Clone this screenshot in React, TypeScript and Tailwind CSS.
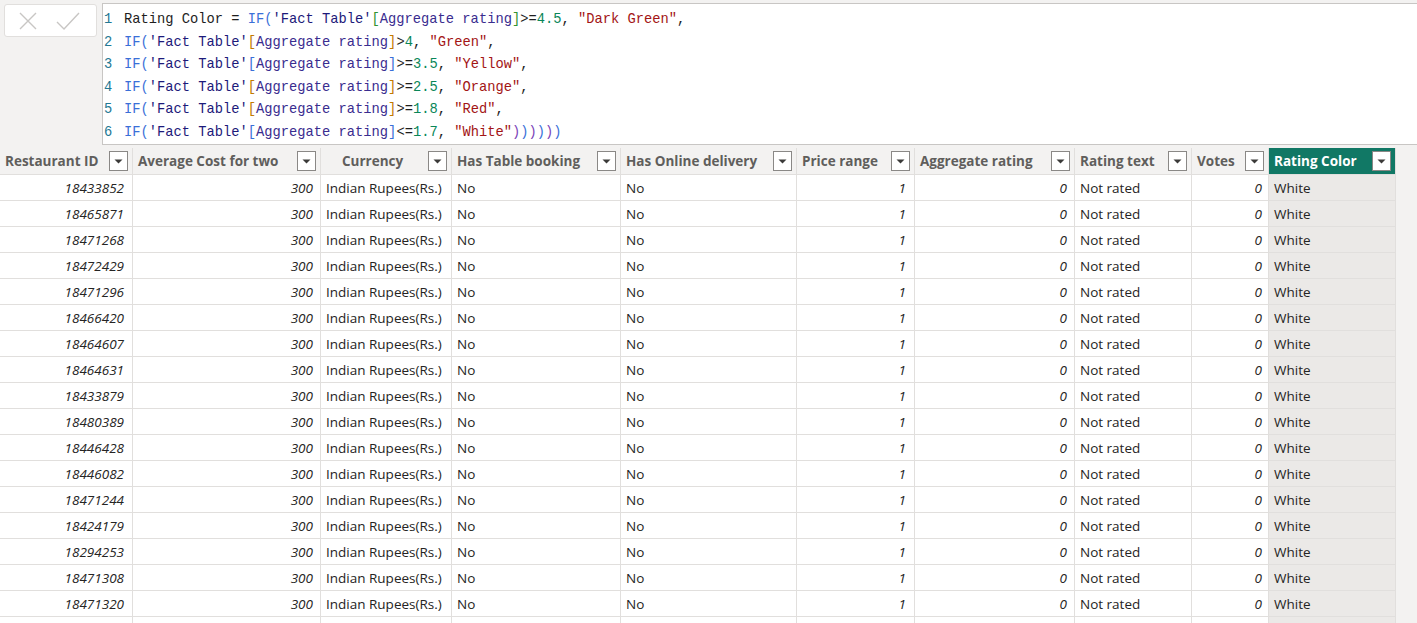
import React from "react";

type Tok = [string, string];

const C = {
  txt: "text-[#1e1e1e]",
  fn: "text-[#3a6fd8]",
  tbl: "text-[#1d1a7a]",
  col: "text-[#3a2d8f]",
  num: "text-[#098658]",
  str: "text-[#a31515]",
  b1: "text-[#319331]",
  b2: "text-[#c27a00]",
  b3: "text-[#3a6fd8]",
  b4: "text-[#7b3fb8]",
};

const bracket = [C.b2, C.b3, C.b2, C.b2, C.b3];

const formula: Tok[][] = [
  [
    ["Rating Color = ", C.txt],
    ["IF", C.fn],
    ["(", C.fn],
    ["'Fact Table'", C.tbl],
    ["[", C.b1],
    ["Aggregate rating", C.col],
    ["]", C.b1],
    [">=", C.txt],
    ["4.5", C.num],
    [", ", C.txt],
    ['"Dark Green"', C.str],
    [",", C.txt],
  ],
  ...[
    [">", "4", '"Green"', ","],
    [">=", "3.5", '"Yellow"', ","],
    [">=", "2.5", '"Orange"', ","],
    [">=", "1.8", '"Red"', ","],
    ["<=", "1.7", '"White"', ""],
  ].map(([op, n, s, end], i): Tok[] => [
    ["IF", C.fn],
    ["(", C.fn],
    ["'Fact Table'", C.tbl],
    ["[", bracket[i]],
    ["Aggregate rating", C.col],
    ["]", bracket[i]],
    [op, C.txt],
    [n, C.num],
    [", ", C.txt],
    [s, C.str],
    ...(end
      ? ([[end, C.txt]] as Tok[])
      : ([
          [")", C.b4],
          [")", C.b3],
          [")", C.b4],
          [")", C.b3],
          [")", C.b4],
          [")", C.b3],
        ] as Tok[])),
  ]),
];

const columns = [
  { name: "Restaurant ID", w: "w-[133px]" },
  { name: "Average Cost for two", w: "w-[188px]" },
  { name: "Currency", w: "w-[131px]", pad: "pl-[21px]" },
  { name: "Has Table booking", w: "w-[169px]" },
  { name: "Has Online delivery", w: "w-[176px]" },
  { name: "Price range", w: "w-[118px]" },
  { name: "Aggregate rating", w: "w-[160px]" },
  { name: "Rating text", w: "w-[117px]" },
  { name: "Votes", w: "w-[77px]" },
  { name: "Rating Color", w: "w-[127px]", active: true },
];

const ids = [
  "18433852", "18465871", "18471268", "18472429", "18471296", "18466420",
  "18464607", "18464631", "18433879", "18480389", "18446428", "18446082",
  "18471244", "18424179", "18294253", "18471308", "18471320",
];

const cell = "flex shrink-0 items-center border-r border-[#e1dfdd] pt-[2px]";

function Dropdown() {
  return (
    <span className="flex h-[20px] w-[19px] shrink-0 items-center justify-center border border-[#8a8886] bg-white">
      <svg width="9" height="5" viewBox="0 0 9 5">
        <path d="M0.5 0.5h8L4.5 4.5z" fill="#3b3a39" />
      </svg>
    </span>
  );
}

export default function App() {
  return (
    <div className="h-[623px] w-[1417px] overflow-hidden bg-[#f3f2f1] font-['Open_Sans',sans-serif] text-[#252423]">
      {/* formula bar */}
      <div className="flex h-[148px]">
        <div className="w-[102px] shrink-0 pl-[4px] pt-[4px]">
          <div className="flex h-[33px] w-[93px] items-center gap-[18px] rounded-[3px] border border-[#e1dfdd] bg-white pl-[13px]">
            <svg width="20" height="20" viewBox="0 0 20 20">
              <path d="M2 2l16 16M18 2L2 18" stroke="#c8c6c4" strokeWidth="1.4" />
            </svg>
            <svg width="24" height="20" viewBox="0 0 24 20">
              <path d="M1 11l7 7L23 2" stroke="#c8c6c4" strokeWidth="1.4" fill="none" />
            </svg>
          </div>
        </div>
        <div className="mt-[3px] h-[142px] flex-1 border-y border-l border-[#c8c6c4] bg-white pt-[5px] font-['Liberation_Mono',monospace] text-[13.75px] leading-[22.6px]">
          {formula.map((line, i) => (
            <div key={i} className="flex whitespace-pre">
              <span className="w-[21px] shrink-0 pl-[1px] text-[#237893]">{i + 1}</span>
              <span>
                {line.map(([t, c], j) => (
                  <span key={j} className={c}>
                    {t}
                  </span>
                ))}
              </span>
            </div>
          ))}
        </div>
      </div>

      {/* table */}
      <div className="w-[1396px] text-[13.5px]">
        <div className="flex h-[27px] border-b border-[#e1dfdd] font-bold text-[#605e5c]">
          {columns.map((c) => (
            <div
              key={c.name}
              className={`${c.w} flex shrink-0 items-center justify-between border-r border-[#e1dfdd] pr-[4px] ${
                c.active ? "bg-[#117865] text-white" : "bg-[#f3f2f1]"
              } ${c.pad ?? "pl-[5px]"}`}
            >
              <span className="whitespace-nowrap">{c.name}</span>
              <Dropdown />
            </div>
          ))}
        </div>
        {ids.map((id) => (
          <div key={id} className="flex h-[26px] border-b border-[#e1dfdd] bg-white">
            <div className={`${cell} w-[133px] justify-end pr-[8px] italic`}>{id}</div>
            <div className={`${cell} w-[188px] justify-end pr-[7px] italic`}>300</div>
            <div className={`${cell} w-[131px] pl-[5px] whitespace-nowrap`}>Indian Rupees(Rs.)</div>
            <div className={`${cell} w-[169px] pl-[5px]`}>No</div>
            <div className={`${cell} w-[176px] pl-[5px]`}>No</div>
            <div className={`${cell} w-[118px] justify-end pr-[8px] italic`}>1</div>
            <div className={`${cell} w-[160px] justify-end pr-[7px] italic`}>0</div>
            <div className={`${cell} w-[117px] pl-[5px]`}>Not rated</div>
            <div className={`${cell} w-[77px] justify-end pr-[6px] italic`}>0</div>
            <div className={`${cell} w-[127px] bg-[#ebe9e7] pl-[5px]`}>White</div>
          </div>
        ))}
        {/* partially visible next row */}
        <div className="flex h-[26px] bg-white">
          {columns.map((c) => (
            <div key={c.name} className={`${c.w} shrink-0 border-r border-[#e1dfdd] ${c.active ? "bg-[#ebe9e7]" : ""}`} />
          ))}
        </div>
      </div>
    </div>
  );
}
